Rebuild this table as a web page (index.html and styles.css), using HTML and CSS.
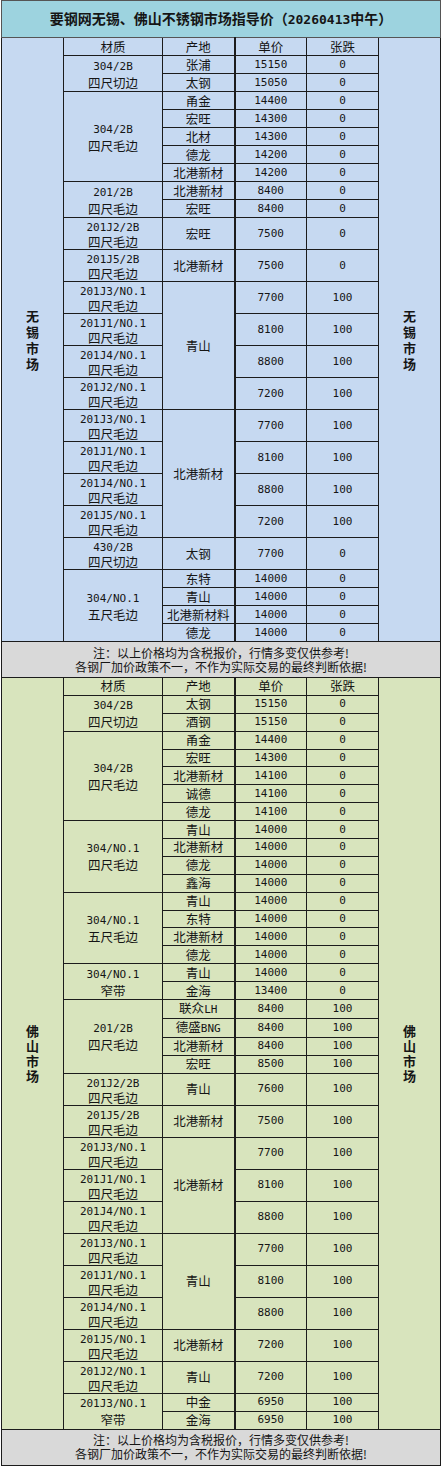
FILE: index.html
```html
<!DOCTYPE html>
<html lang="zh-CN">
<head>
<meta charset="utf-8">
<title>要钢网无锡、佛山不锈钢市场指导价</title>
<link rel="stylesheet" href="styles.css">
</head>
<body>
<table class="sheet">
<colgroup>
<col class="c-mk"><col class="c-mat"><col class="c-org"><col class="c-pr"><col class="c-ch"><col class="c-mk2">
</colgroup>
<thead>
<tr class="title"><td colspan="6">要钢网无锡、佛山不锈钢市场指导价（<span class="tnum">20260413</span>中午）</td></tr>
</thead>
<tbody class="wx">
<tr class="n"><td class="mk" rowspan="25"><span class="vert">无锡市场</span></td><td>材质</td><td>产地</td><td class="p">单价</td><td>张跌</td><td class="mk" rowspan="25"><span class="vert">无锡市场</span></td></tr>
<tr class="n"><td class="mat" rowspan="2"><span class="m">304/2B</span><br>四尺切边</td><td>张浦</td><td class="p m">15150</td><td class="m">0</td></tr>
<tr class="n"><td>太钢</td><td class="p m">15050</td><td class="m">0</td></tr>
<tr class="n"><td class="mat" rowspan="5"><span class="m">304/2B</span><br>四尺毛边</td><td>甬金</td><td class="p m">14400</td><td class="m">0</td></tr>
<tr class="n"><td>宏旺</td><td class="p m">14300</td><td class="m">0</td></tr>
<tr class="n"><td>北材</td><td class="p m">14300</td><td class="m">0</td></tr>
<tr class="n"><td>德龙</td><td class="p m">14200</td><td class="m">0</td></tr>
<tr class="n"><td>北港新材</td><td class="p m">14200</td><td class="m">0</td></tr>
<tr class="n"><td class="mat" rowspan="2"><span class="m">201/2B</span><br>四尺毛边</td><td>北港新材</td><td class="p m">8400</td><td class="m">0</td></tr>
<tr class="n"><td>宏旺</td><td class="p m">8400</td><td class="m">0</td></tr>
<tr class="t"><td class="mat"><span class="m">201J2/2B</span><br>四尺毛边</td><td>宏旺</td><td class="p m">7500</td><td class="m">0</td></tr>
<tr class="t"><td class="mat"><span class="m">201J5/2B</span><br>四尺毛边</td><td>北港新材</td><td class="p m">7500</td><td class="m">0</td></tr>
<tr class="t"><td class="mat"><span class="m">201J3/NO.1</span><br>四尺毛边</td><td rowspan="4">青山</td><td class="p m">7700</td><td class="m">100</td></tr>
<tr class="t"><td class="mat"><span class="m">201J1/NO.1</span><br>四尺毛边</td><td class="p m">8100</td><td class="m">100</td></tr>
<tr class="t"><td class="mat"><span class="m">201J4/NO.1</span><br>四尺毛边</td><td class="p m">8800</td><td class="m">100</td></tr>
<tr class="t"><td class="mat"><span class="m">201J2/NO.1</span><br>四尺毛边</td><td class="p m">7200</td><td class="m">100</td></tr>
<tr class="t"><td class="mat"><span class="m">201J3/NO.1</span><br>四尺毛边</td><td rowspan="4">北港新材</td><td class="p m">7700</td><td class="m">100</td></tr>
<tr class="t"><td class="mat"><span class="m">201J1/NO.1</span><br>四尺毛边</td><td class="p m">8100</td><td class="m">100</td></tr>
<tr class="t"><td class="mat"><span class="m">201J4/NO.1</span><br>四尺毛边</td><td class="p m">8800</td><td class="m">100</td></tr>
<tr class="t"><td class="mat"><span class="m">201J5/NO.1</span><br>四尺毛边</td><td class="p m">7200</td><td class="m">100</td></tr>
<tr class="t"><td class="mat"><span class="m">430/2B</span><br>四尺切边</td><td>太钢</td><td class="p m">7700</td><td class="m">0</td></tr>
<tr class="n"><td class="mat" rowspan="4"><span class="m">304/NO.1</span><br>五尺毛边</td><td>东特</td><td class="p m">14000</td><td class="m">0</td></tr>
<tr class="n"><td>青山</td><td class="p m">14000</td><td class="m">0</td></tr>
<tr class="n"><td>北港新材料</td><td class="p m">14000</td><td class="m">0</td></tr>
<tr class="n"><td>德龙</td><td class="p m">14000</td><td class="m">0</td></tr>
<tr class="note"><td colspan="6">注：以上价格均为含税报价，行情多变仅供参考!<br>各钢厂加价政策不一，不作为实际交易的最终判断依据!</td></tr>
</tbody>
<tbody class="fs">
<tr class="n"><td class="mk" rowspan="34"><span class="vert">佛山市场</span></td><td>材质</td><td>产地</td><td class="p">单价</td><td>张跌</td><td class="mk" rowspan="34"><span class="vert">佛山市场</span></td></tr>
<tr class="n"><td class="mat" rowspan="2"><span class="m">304/2B</span><br>四尺切边</td><td>太钢</td><td class="p m">15150</td><td class="m">0</td></tr>
<tr class="n"><td>酒钢</td><td class="p m">15150</td><td class="m">0</td></tr>
<tr class="n"><td class="mat" rowspan="5"><span class="m">304/2B</span><br>四尺毛边</td><td>甬金</td><td class="p m">14400</td><td class="m">0</td></tr>
<tr class="n"><td>宏旺</td><td class="p m">14300</td><td class="m">0</td></tr>
<tr class="n"><td>北港新材</td><td class="p m">14100</td><td class="m">0</td></tr>
<tr class="n"><td>诚德</td><td class="p m">14100</td><td class="m">0</td></tr>
<tr class="n"><td>德龙</td><td class="p m">14100</td><td class="m">0</td></tr>
<tr class="n"><td class="mat" rowspan="4"><span class="m">304/NO.1</span><br>四尺毛边</td><td>青山</td><td class="p m">14000</td><td class="m">0</td></tr>
<tr class="n"><td>北港新材</td><td class="p m">14000</td><td class="m">0</td></tr>
<tr class="n"><td>德龙</td><td class="p m">14000</td><td class="m">0</td></tr>
<tr class="n"><td>鑫海</td><td class="p m">14000</td><td class="m">0</td></tr>
<tr class="n"><td class="mat" rowspan="4"><span class="m">304/NO.1</span><br>五尺毛边</td><td>青山</td><td class="p m">14000</td><td class="m">0</td></tr>
<tr class="n"><td>东特</td><td class="p m">14000</td><td class="m">0</td></tr>
<tr class="n"><td>北港新材</td><td class="p m">14000</td><td class="m">0</td></tr>
<tr class="n"><td>德龙</td><td class="p m">14000</td><td class="m">0</td></tr>
<tr class="n"><td class="mat" rowspan="2"><span class="m">304/NO.1</span><br>窄带</td><td>青山</td><td class="p m">14000</td><td class="m">0</td></tr>
<tr class="n"><td>金海</td><td class="p m">13400</td><td class="m">0</td></tr>
<tr class="n"><td class="mat" rowspan="4"><span class="m">201/2B</span><br>四尺毛边</td><td>联众<span class="m">LH</span></td><td class="p m">8400</td><td class="m">100</td></tr>
<tr class="n"><td>德盛<span class="m">BNG</span></td><td class="p m">8400</td><td class="m">100</td></tr>
<tr class="n"><td>北港新材</td><td class="p m">8400</td><td class="m">100</td></tr>
<tr class="n"><td>宏旺</td><td class="p m">8500</td><td class="m">100</td></tr>
<tr class="t"><td class="mat"><span class="m">201J2/2B</span><br>四尺毛边</td><td>青山</td><td class="p m">7600</td><td class="m">100</td></tr>
<tr class="t"><td class="mat"><span class="m">201J5/2B</span><br>四尺毛边</td><td>北港新材</td><td class="p m">7500</td><td class="m">100</td></tr>
<tr class="t"><td class="mat"><span class="m">201J3/NO.1</span><br>四尺毛边</td><td rowspan="3">北港新材</td><td class="p m">7700</td><td class="m">100</td></tr>
<tr class="t"><td class="mat"><span class="m">201J1/NO.1</span><br>四尺毛边</td><td class="p m">8100</td><td class="m">100</td></tr>
<tr class="t"><td class="mat"><span class="m">201J4/NO.1</span><br>四尺毛边</td><td class="p m">8800</td><td class="m">100</td></tr>
<tr class="t"><td class="mat"><span class="m">201J3/NO.1</span><br>四尺毛边</td><td rowspan="3">青山</td><td class="p m">7700</td><td class="m">100</td></tr>
<tr class="t"><td class="mat"><span class="m">201J1/NO.1</span><br>四尺毛边</td><td class="p m">8100</td><td class="m">100</td></tr>
<tr class="t"><td class="mat"><span class="m">201J4/NO.1</span><br>四尺毛边</td><td class="p m">8800</td><td class="m">100</td></tr>
<tr class="t"><td class="mat"><span class="m">201J5/NO.1</span><br>四尺毛边</td><td>北港新材</td><td class="p m">7200</td><td class="m">100</td></tr>
<tr class="t"><td class="mat"><span class="m">201J2/NO.1</span><br>四尺毛边</td><td>青山</td><td class="p m">7200</td><td class="m">100</td></tr>
<tr class="n"><td class="mat" rowspan="2"><span class="m">201J3/NO.1</span><br>窄带</td><td>中金</td><td class="p m">6950</td><td class="m">100</td></tr>
<tr class="n"><td>金海</td><td class="p m">6950</td><td class="m">100</td></tr>
<tr class="note note2"><td colspan="6">注：以上价格均为含税报价，行情多变仅供参考!<br>各钢厂加价政策不一，不作为实际交易的最终判断依据!</td></tr>
</tbody>
</table>
</body>
</html>
```
FILE: styles.css
```css
html, body {
  margin: 0;
  padding: 0;
  background: #ffffff;
}

body {
  font-family: "Noto Sans CJK SC", sans-serif;
  color: #151515;
}

.sheet {
  border-collapse: collapse;
  table-layout: fixed;
  width: 439px;
  margin: 0 0 0 1px;
  font-size: 12.5px;
}

.c-mk { width: 62px; }
.c-mat { width: 99px; }
.c-org { width: 72px; }
.c-pr { width: 72px; }
.c-ch { width: 72px; }
.c-mk2 { width: 62px; }

.sheet td {
  border: 1px solid #1c1c1c;
  padding: 0;
  text-align: center;
  vertical-align: middle;
  line-height: 16px;
  white-space: nowrap;
}

.sheet td.p {
  border-left: 2px solid #1c1c1c;
}

.title td {
  height: 36px;
  background: #9dd3df;
  font-weight: bold;
  font-size: 14px;
  border-color: #555555;
}

.tnum {
  font-family: "DejaVu Sans Mono", monospace;
  font-size: 13px;
}

.wx td {
  background: #c6d9f1;
}

.fs td {
  background: #d8e4bd;
}

tr.n {
  height: 18px;
}

.fs tr.n {
  height: 17.9px;
}

tr.t {
  height: 32px;
}

tr.t td.mat {
  line-height: 14px;
  padding-top: 1px;
}

.m {
  font-family: "DejaVu Sans Mono", monospace;
  font-size: 11px;
}

td.m {
  font-size: 11px;
}

.mk {
  font-weight: bold;
  font-size: 13px;
}

.vert {
  display: inline-block;
  width: 1em;
  white-space: normal;
  line-height: 16px;
}

.fs .vert {
  line-height: 15px;
}

.sheet tr.note td {
  height: 35px;
  background: #d9d9d9;
  font-size: 12px;
  line-height: 14px;
}

.sheet tr.note2 td {
  line-height: 14.5px;
}
```
